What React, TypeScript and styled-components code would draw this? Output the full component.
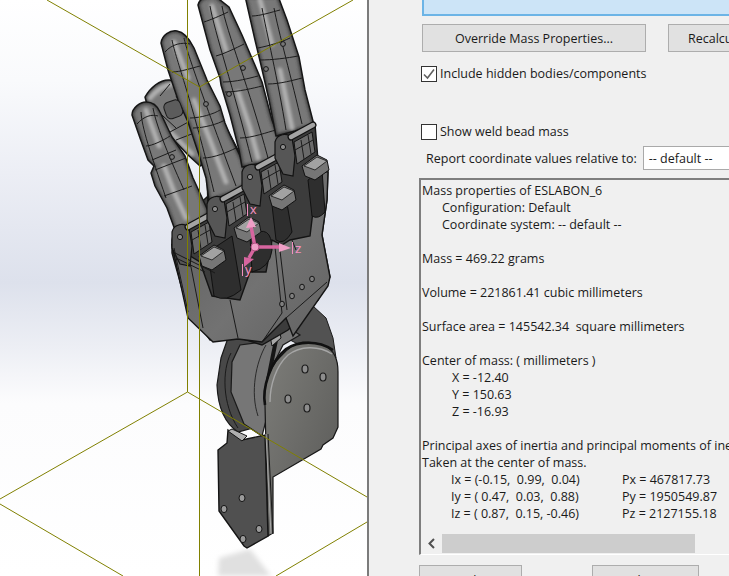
import * as React from 'react';
import styled, { createGlobalStyle } from 'styled-components';

const GlobalStyle = createGlobalStyle`
  html, body {
    margin: 0;
    padding: 0;
    background: #f0f0f0;
  }
`;

const Page = styled.div`
  display: flex;
  width: 729px;
  height: 576px;
  overflow: hidden;
  font-family: 'Open Sans', 'Liberation Sans', sans-serif;
  font-size: 12.5px;
  color: #1a1a1a;
`;

const Viewport = styled.div`
  flex: 0 0 367px;
  height: 576px;
  background: linear-gradient(180deg, #fff 0%, #f9fafc 14%, #eceef5 30%, #dde1ec 49%, #eceef4 60%, #fcfcfd 70%, #fff 100%);
  svg {
    display: block;
  }
`;

const Dialog = styled.div`
  flex: 1;
  min-width: 0;
  height: 576px;
  overflow: hidden;
  background: #f0f0f0;
  border-left: 2px solid #7b7b7b;
  padding-left: 51px;
  display: flex;
  flex-direction: column;
  align-items: flex-start;
`;

const SelectionBox = styled.div`
  flex: none;
  width: 340px;
  height: 14px;
  margin: 0 0 8px 2px;
  background: #cce4f7;
  border: 2px solid #6cb4e6;
  border-top: 0;
`;

const ButtonRow = styled.div`
  display: flex;
  flex: none;
  gap: 22px;
  margin-left: 2px;
`;

const PushButton = styled.div<{ $width: number }>`
  flex: none;
  box-sizing: border-box;
  width: ${(p) => p.$width}px;
  height: 28px;
  background: #e1e1e1;
  border: 1px solid #adadad;
  display: flex;
  align-items: center;
  justify-content: center;
  white-space: nowrap;
`;

const RecalcButton = styled(PushButton)`
  justify-content: flex-start;
  padding-left: 19px;
`;

const CheckRow = styled.label<{ $top: number }>`
  display: flex;
  flex: none;
  align-items: center;
  gap: 3px;
  height: 17px;
  margin: ${(p) => p.$top}px 0 0 1px;
  white-space: nowrap;
`;

const CheckBox = styled.span`
  flex: none;
  box-sizing: border-box;
  width: 16px;
  height: 16px;
  background: #fff;
  border: 1px solid #333;
  display: flex;
  align-items: center;
  justify-content: center;
`;

const CoordRow = styled.div`
  display: flex;
  flex: none;
  align-items: center;
  gap: 6px;
  height: 24px;
  margin: 6px 0 0 6px;
  white-space: nowrap;
`;

const SelectBox = styled.div`
  flex: none;
  box-sizing: border-box;
  width: 200px;
  height: 24px;
  padding-left: 5px;
  display: flex;
  align-items: center;
  background: #fff;
  border: 1px solid #a9a9a9;
`;

const ReportBox = styled.div`
  flex: none;
  box-sizing: border-box;
  width: 380px;
  height: 377px;
  margin: 8px 0 0 -1px;
  border-left: 2px solid #7e7e7e;
  border-top: 2px solid #7e7e7e;
  border-bottom: 1px solid #fff;
  display: flex;
  flex-direction: column;
`;

const ReportText = styled.div`
  flex: 1;
  padding: 2px 0 0 1px;
  line-height: 17px;
  white-space: pre;
  overflow: hidden;
`;

const ReportLine = styled.div<{ $indent?: number }>`
  height: 17px;
  padding-left: ${(p) => p.$indent ?? 0}px;
`;

const AxisLine = styled.div`
  display: flex;
  height: 17px;
  padding-left: 29px;
`;

const AxisCell = styled.span`
  flex: 0 0 171px;
`;

const ScrollBar = styled.div`
  flex: none;
  height: 19px;
  margin-bottom: 1px;
  display: flex;
  align-items: center;
`;

const ScrollArrow = styled.span`
  flex: 0 0 21px;
  display: flex;
  align-items: center;
  justify-content: center;
`;

const ScrollThumb = styled.span`
  flex: 0 0 253px;
  height: 19px;
  background: #cdcdcd;
`;

const FooterRow = styled.div`
  display: flex;
  flex: none;
  gap: 70px;
  margin: 10px 0 0 -1px;
`;

const FooterButton = styled(PushButton)`
  align-items: flex-start;
  padding-top: 6px;
`;

const LINES: [number, number, number, number][] = [
  [187.5, 0, 187.5, 392],
  [199.5, 87, 199.5, 576],
  [47, 0, 199.5, 87],
  [199.5, 87, 353, 0],
  [0, 499, 187.5, 392],
  [187.5, 392, 367, 497],
  [0, 504, 123, 576],
  [276, 576, 367, 522],
];

type Finger = { outline: string; light: string[]; seams: string[]; pins?: [number, number][] };

const FINGERS: Finger[] = [
  {
    outline: 'M207 175 L225 125 L238 150 L248 184 L232 198 L208 205 Z',
    light: ['M228 150 L236 178'],
    seams: [],
  },
  {
    outline: 'M145 97 C150 88 160 79 170 80 C177 82 181 90 185 100 L198 130 L207 162 L200 166 L188 155 L172 138 L158 124 L149 112 Z',
    light: ['M150 98 C155 92 162 86 172 84', 'M162 124 L192 154'],
    seams: ['M150 104 L176 128', 'M176 96 L192 122', 'M160 96 L170 84', 'M170 132 L192 120', 'M176 140 L202 130'],
  },
  {
    outline: 'M132 115 C132 108 140 102 146 102 C152 102 157 105 160 112 L172 137 L185 156 L193 178 L209 213 L198 223 L175 230 L167 208 L155 186 L151 173 L154 166 L148 160 L140 138 Z',
    light: ['M146 110 L159 146', 'M164 166 L174 192 L186 218'],
    seams: ['M137 124 C144 116 152 114 158 116', 'M146 146 C152 146 164 140 170 136', 'M152 160 L176 150', 'M155 170 L186 158', 'M164 196 L192 186', 'M141 112 C142 128 150 152 166 198', 'M153 108 C156 124 166 150 184 190'],
    pins: [[172, 157]],
  },
  {
    outline: 'M161 43 C162 35 170 30 177 31 C185 32 190 40 194 48 L207 80 L220 106 L225 123 L230 135 L242 160 L249 183 L232 193 L209 201 L206 178 L199 155 L188 122 L178 100 L168 70 Z',
    light: ['M174 42 L188 78', 'M194 100 L210 140 L226 182'],
    seams: ['M165 52 C172 44 182 42 190 44', 'M172 72 C180 72 192 68 200 66', 'M190 118 C200 118 214 114 220 110', 'M193 128 C204 128 218 124 225 120', 'M203 158 C214 158 228 152 236 148', 'M172 40 C176 60 192 100 214 192', 'M184 38 C188 56 204 100 236 186'],
    pins: [[206, 104]],
  },
  {
    outline: 'M198 5 C199 0 204 -4 215 -4 L229 7 L242 35 L257 70 L262 82 L272 120 L285 153 L270 161 L242 167 L239 150 L230 115 L221 85 L220 78 L210 50 Z',
    light: ['M212 6 L226 50', 'M238 92 L250 128 L258 158'],
    seams: ['M204 22 C210 20 220 16 228 12', 'M216 56 C224 54 236 48 244 44', 'M223 82 C236 82 250 78 258 76', 'M225 92 C238 92 254 88 262 86', 'M240 138 C252 138 268 132 276 130', 'M210 6 C214 30 234 90 252 162', 'M222 6 C226 30 250 90 268 158'],
    pins: [[243, 68], [229, 94]],
  },
  {
    outline: 'M245 -4 L278 -4 L287 20 L299 57 L305 90 L314 125 L295 131 L276 136 L269 100 L261 65 L255 40 Z',
    light: ['M260 0 L272 44', 'M280 70 L292 128'],
    seams: ['M252 16 C260 16 272 12 280 10', 'M258 48 C268 46 282 42 290 38', 'M260 60 C272 60 288 58 298 56', 'M268 84 C280 84 294 80 302 78', 'M262 8 C266 30 278 80 286 130', 'M274 8 C278 30 292 80 302 124'],
    pins: [[283, 44], [266, 69]],
  },
];

const PALM_BACK = 'M172 240 L175 226 L207 197 L243 165 L277 133 L315 124 L318 160 L328 170 L327 200 L322 235 L330 277 L318 300 L288 330 L262 345 L237 337 L210 340 L187 307 L172 253 Z';
const PALM_FRONT = 'M172 245 L200 262 L212 296 L240 300 L250 272 L266 272 L272 240 L282 245 L290 240 L310 236 L318 170 L328 172 L327 200 L322 235 L330 277 L328 286 L293 336 L286 318 L262 342 L238 339 L213 342 L188 318 Z';
const PALM_SLOTS = [
  'M208 252 L232 236 L241 290 Q226 303 214 296 Z',
  'M250 236 Q272 222 272 250 Q270 268 252 272 Z',
  'M272 205 L286 198 L292 232 Q284 246 276 240 Z',
  'M308 180 L322 170 L325 212 Q318 220 312 216 Z',
];
const PALM_SEAMS = [
  'M275 247 L282 313',
  'M279 242 L287 310',
  'M230 300 L238 338',
  'M175 253 L215 273',
  'M176 258 L205 272',
  'M190 262 L203 328',
  'M282 313 L262 342',
  'M327 282 L286 318',
  'M174 248 L188 312',
  'M292 240 L296 250',
];

// one knuckle clevis: rounded lobe, cross pin and the small blocks beside it
const Knuckle = ({ x, y }: { x: number; y: number }) => (
  <g transform={`translate(${x} ${y})`}>
    <path d="M-10 -8 C-8 -16 2 -18 7 -12 L10 6 L8 26 L-2 24 L-10 8 Z" fill="#565656" stroke="#121212" strokeWidth="1.2" />
    <circle cx="-2" cy="-3" r="2.6" fill="#8a8a8a" stroke="#121212" />
    <path d="M6 -13 L28 -25" stroke="#121212" strokeWidth="7" strokeLinecap="round" />
    <path d="M6 -13 L28 -25" stroke="#a4a4a4" strokeWidth="4.5" strokeLinecap="round" />
    <path d="M9 -8 L27 -18 L30 2 L12 14 Z" fill="#6a6a6a" stroke="#121212" />
    <path d="M16 -10 L19 9 M23 -15 L26 4" stroke="#1c1c1c" fill="none" />
    <path d="M10 0 L28 -10" stroke="#1c1c1c" fill="none" />
    <path d="M17 16 L32 5 L42 10 L44 20 L30 30 L20 26 Z" fill="#767676" stroke="#121212" />
    <path d="M19 16 L32 7 L42 11 L30 20 Z" fill="#a2a2a2" stroke="#161616" strokeWidth="0.8" />
  </g>
);

const KNUCKLES: [number, number][] = [
  [182, 240],
  [217, 212],
  [252, 180],
  [285, 150],
];

const WRIST_DISC = 'M228 338 L221 358 L217 385 C218 410 226 424 238 432 L264 425 L282 330 Z';
const WRIST_CONNECT = 'M240 345 L232 362 L231 392 L244 424 L262 436 L270 405 L268 375 L283 345 L300 335 L280 322 L262 342 Z';
const WRIST_BACK = 'M290 340 L313 306 L326 318 L333 338 L336 358 L300 345 Z';
const WRIST_PLATE = 'M303 342 C318 342 330 345 335 356 C338 362 338 368 338 372 L338 427 L333 438 L323 445 L321 449 L273 477 L273 533 L268 536 L265 405 C262 392 268 368 280 357 C288 348 296 343 303 342 Z';
const DARK_PLATE = 'M228 430 L242 440 L265 435 L268 536 L247 548 L244 546 L219 511 L218 450 L227 443 Z';
const SHADOW = 'M219 558 L250 549 L271 576 L218 576 Z';

const PLATE_HOLES: [number, number][] = [[305, 369], [323, 377], [288, 399], [307, 408]];
const DARK_HOLES: [number, number][] = [[242, 498], [224, 509], [259, 529], [243, 539]];
const PALM_HOLES: [number, number][] = [[312, 279], [302, 287], [292, 296], [282, 304]];

const HandScene = () => (
  <svg width="367" height="576" viewBox="0 0 367 576">
    <defs>
      <filter id="soft" x="-60%" y="-60%" width="220%" height="220%">
        <feGaussianBlur stdDeviation="1.8" />
      </filter>
      <filter id="softer" x="-30%" y="-30%" width="160%" height="160%">
        <feGaussianBlur stdDeviation="2.5" />
      </filter>
      <linearGradient id="palmShade" x1="0" y1="0" x2="1" y2="1">
        <stop offset="0" stopColor="#5a5a5a" />
        <stop offset="0.6" stopColor="#727272" />
        <stop offset="1" stopColor="#626262" />
      </linearGradient>
      <linearGradient id="plateShade" x1="0" y1="0" x2="1" y2="1">
        <stop offset="0" stopColor="#7e7e7a" />
        <stop offset="1" stopColor="#575755" />
      </linearGradient>
      {FINGERS.map((f, i) => (
        <clipPath key={f.outline} id={`finger-${i}`}>
          <path d={f.outline} />
        </clipPath>
      ))}
    </defs>

    <path d={SHADOW} fill="#e0e0e0" filter="url(#softer)" />

    <path d={WRIST_DISC} fill="#484848" stroke="#1a1a1a" strokeWidth="1.2" />
    <path d="M231 353 C222 370 222 404 238 428" fill="none" stroke="#1a1a1a" />
    <path d={WRIST_BACK} fill="#525252" stroke="#1a1a1a" />
    <path d={WRIST_CONNECT} fill="#767676" stroke="#1a1a1a" strokeWidth="1.2" />
    <path d="M266 345 C256 362 250 392 258 416" fill="none" stroke="#2a2a2a" />
    <path d="M284 320 L276 340 L268 380" fill="none" stroke="#161616" strokeWidth="4" />
    <path d="M279 328 L270 336 L272 346 L281 338 Z" fill="#a8a8a8" stroke="#161616" />
    <path d={WRIST_PLATE} fill="url(#plateShade)" stroke="#161616" strokeWidth="1.2" />
    <path d="M265 405 C262 388 270 362 286 349 C298 341 318 340 333 350" fill="none" stroke="#111" strokeWidth="2.6" />
    <path d="M270 402 C270 385 276 366 288 355 C300 346 318 345 332 354" fill="none" stroke="#a6a6a6" strokeWidth="1.4" />
    {PLATE_HOLES.map(([cx, cy]) => (
      <ellipse key={cx + cy} cx={cx} cy={cy} rx="3" ry="4" fill="#8d8d8d" stroke="#1b1b1b" strokeWidth="1.2" />
    ))}
    <path d={DARK_PLATE} fill="#505050" stroke="#141414" strokeWidth="1.4" />
    <path d="M266 434 L271 534" fill="none" stroke="#a8a8a8" />
    <path d="M268 434 L273 534" fill="none" stroke="#1a1a1a" />
    <path d="M228 431 L232 429 L247 436 L242 441 Z" fill="#b0b0b0" stroke="#161616" />
    {DARK_HOLES.map(([cx, cy]) => (
      <ellipse key={cx + cy} cx={cx} cy={cy} rx="3" ry="3.6" fill="#9a9a9a" stroke="#161616" />
    ))}

    <path d={PALM_BACK} fill="#3c3c3c" stroke="#141414" strokeWidth="1.4" />
    {FINGERS.map((f, i) => (
      <g key={f.outline}>
        <path d={f.outline} fill="#787878" />
        <g clipPath={`url(#finger-${i})`}>
          <path d={f.outline} fill="none" stroke="#3e3e3e" strokeWidth="4" filter="url(#soft)" />
          {f.light.map((d) => (
            <path key={d} d={d} fill="none" stroke="#b0b0b0" strokeWidth="5" strokeLinecap="round" filter="url(#soft)" />
          ))}
        </g>
        <path d={f.outline} fill="none" stroke="#161616" strokeWidth="1.5" strokeLinejoin="round" />
        {f.seams.map((d) => (
          <path key={d} d={d} fill="none" stroke="#1c1c1c" />
        ))}
        {f.pins?.map(([cx, cy]) => (
          <circle key={cx} cx={cx} cy={cy} r="2.4" fill="#777" stroke="#161616" />
        ))}
      </g>
    ))}
    <rect x="165" y="101" width="17" height="17" rx="5" fill="#5c5c5c" stroke="#1a1a1a" transform="rotate(-20 173 110)" />

    <path d={PALM_FRONT} fill="url(#palmShade)" stroke="#141414" strokeWidth="1.4" />
    {PALM_SLOTS.map((d) => (
      <path key={d} d={d} fill="#2e2e2e" stroke="#111" />
    ))}
    {KNUCKLES.map(([x, y]) => (
      <Knuckle key={x} x={x} y={y} />
    ))}
    {PALM_SEAMS.map((d) => (
      <path key={d} d={d} fill="none" stroke="#1a1a1a" />
    ))}
    {PALM_HOLES.map(([cx, cy]) => (
      <ellipse key={cx} cx={cx} cy={cy} rx="2.4" ry="2.8" fill="#7e7e7e" stroke="#161616" />
    ))}

    <g stroke="#d7659f" fill="none">
      <path d="M255 247 L251 226" strokeWidth="3.5" />
      <path d="M255 247 L280 247" strokeWidth="3.5" />
      <path d="M255 247 L249 258" strokeWidth="3.5" />
    </g>
    <path d="M251 217 L246 228 L256 227 Z" fill="#ef9fc6" />
    <path d="M291 248 L279 243 L279 252 Z" fill="#ef9fc6" />
    <path d="M244 267 L244 257 L254 259 Z" fill="#d7659f" />
    <circle cx="255" cy="247" r="4" fill="#ef9fc6" stroke="#b04f80" />
    <g stroke="#f390c0">
      <path d="M247.5 204 L247.5 216" />
      <path d="M292.5 242 L292.5 254" />
      <path d="M242.5 264 L242.5 276" />
    </g>
    <g fill="#f390c0" fontFamily="Liberation Sans, sans-serif" fontSize="13">
      <text x="250" y="214">x</text>
      <text x="295" y="253">z</text>
      <text x="245" y="274">y</text>
    </g>

    <g stroke="#808000" fill="none">
      {LINES.map(([x1, y1, x2, y2]) => (
        <line key={`${x1}-${y1}-${x2}`} x1={x1} y1={y1} x2={x2} y2={y2} />
      ))}
    </g>
  </svg>
);

const App = () => (
  <Page>
    <GlobalStyle />
    <Viewport>
      <HandScene />
    </Viewport>
    <Dialog>
      <SelectionBox />
      <ButtonRow>
        <PushButton $width={224}>Override Mass Properties...</PushButton>
        <RecalcButton $width={120}>Recalculate</RecalcButton>
      </ButtonRow>
      <CheckRow $top={13}>
        <CheckBox>
          <svg width="14" height="14" viewBox="0 0 14 14">
            <path d="M2 7.5 L5.5 11 L12 2.5" fill="none" stroke="#606060" strokeWidth="1.6" />
          </svg>
        </CheckBox>
        Include hidden bodies/components
      </CheckRow>
      <CheckRow $top={41}>
        <CheckBox />
        Show weld bead mass
      </CheckRow>
      <CoordRow>
        Report coordinate values relative to:
        <SelectBox>-- default --</SelectBox>
      </CoordRow>
      <ReportBox>
        <ReportText>
          <ReportLine>Mass properties of ESLABON_6</ReportLine>
          <ReportLine $indent={20}>Configuration: Default</ReportLine>
          <ReportLine $indent={20}>Coordinate system: -- default --</ReportLine>
          <ReportLine />
          <ReportLine>Mass = 469.22 grams</ReportLine>
          <ReportLine />
          <ReportLine>Volume = 221861.41 cubic millimeters</ReportLine>
          <ReportLine />
          <ReportLine>Surface area = 145542.34  square millimeters</ReportLine>
          <ReportLine />
          <ReportLine>Center of mass: ( millimeters )</ReportLine>
          <ReportLine $indent={30}>X = -12.40</ReportLine>
          <ReportLine $indent={30}>Y = 150.63</ReportLine>
          <ReportLine $indent={30}>Z = -16.93</ReportLine>
          <ReportLine />
          <ReportLine>Principal axes of inertia and principal moments of inertia: ( grams * square millimeters )</ReportLine>
          <ReportLine>Taken at the center of mass.</ReportLine>
          <AxisLine>
            <AxisCell>Ix = (-0.15,  0.99,  0.04)</AxisCell>
            <span>Px = 467817.73</span>
          </AxisLine>
          <AxisLine>
            <AxisCell>Iy = ( 0.47,  0.03,  0.88)</AxisCell>
            <span>Py = 1950549.87</span>
          </AxisLine>
          <AxisLine>
            <AxisCell>Iz = ( 0.87,  0.15, -0.46)</AxisCell>
            <span>Pz = 2127155.18</span>
          </AxisLine>
        </ReportText>
        <ScrollBar>
          <ScrollArrow>
            <svg width="9" height="11" viewBox="0 0 9 11">
              <path d="M7 1 L2.5 5.5 L7 10" fill="none" stroke="#505050" strokeWidth="2" />
            </svg>
          </ScrollArrow>
          <ScrollThumb />
        </ScrollBar>
      </ReportBox>
      <FooterRow>
        <FooterButton $width={103}>Help</FooterButton>
        <FooterButton $width={107}>Close</FooterButton>
      </FooterRow>
    </Dialog>
  </Page>
);

export default App;
